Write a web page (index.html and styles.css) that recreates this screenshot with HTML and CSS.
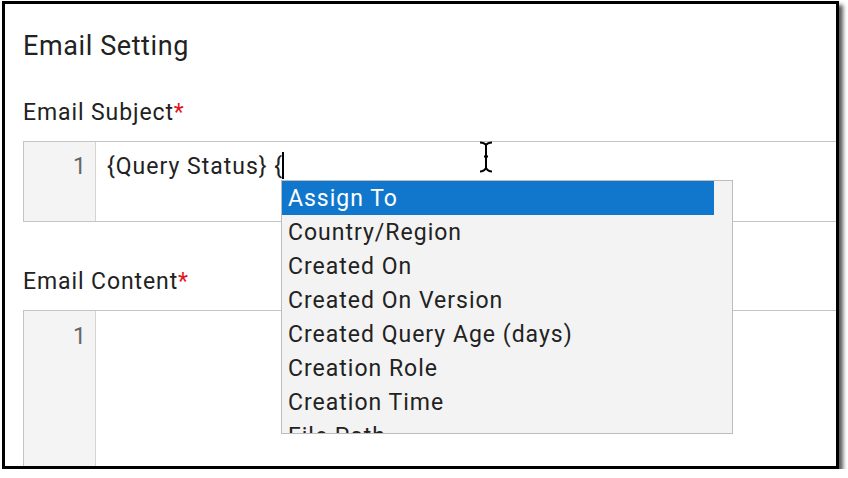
FILE: index.html
```html
<!DOCTYPE html>
<html>
<head>
<meta charset="utf-8">
<link rel="stylesheet" href="styles.css">
</head>
<body>
<div class="frame">
  <h1 class="title">Email Setting</h1>
  <div class="label">Email Subject<span class="req">*</span></div>
  <div class="editor subject">
    <div class="gutter"><span class="ln">1</span></div>
    <div class="code"><span class="line">{Query Status} {<span class="caret"></span></span></div>
    <ul class="suggest">
      <li class="sel">Assign To</li>
      <li>Country/Region</li>
      <li>Created On</li>
      <li>Created On Version</li>
      <li>Created Query Age (days)</li>
      <li>Creation Role</li>
      <li>Creation Time</li>
      <li>File Path</li>
    </ul>
  </div>
  <div class="label content-label">Email Content<span class="req">*</span></div>
  <div class="editor body-editor">
    <div class="gutter"><span class="ln">1</span></div>
    <div class="code"></div>
  </div>
  <svg class="ibeam" width="16" height="32" viewBox="0 0 16 32">
    <path d="M2 1.5 Q6 1.5 8 4 Q10 1.5 14 1.5 M8 4 L8 27 M2 30.5 Q6 30.5 8 27 Q10 30.5 14 30.5 M6 15.5 L10 15.5" fill="none" stroke="#000" stroke-width="2"/>
  </svg>
</div>
</body>
</html>
```
FILE: styles.css
```css
html, body {
  margin: 0;
  padding: 0;
  background: #fff;
}
body {
  font-family: Roboto, "Noto Sans", sans-serif;
  color: #222;
}
.frame {
  position: relative;
  margin: 1px 0 0 2px;
  width: 813px;
  height: 435px;
  border: 3px solid #000;
  box-shadow: 4px 4px 4px rgba(0,0,0,0.65);
  overflow: hidden;
  padding: 27px 0 0 18px;
}
.title {
  margin: 0;
  font-size: 27px;
  line-height: 30px;
  letter-spacing: 0.6px;
  font-weight: 400;
  color: #222;
}
.label {
  margin-top: 39px;
  font-size: 23px;
  line-height: 26px;
  letter-spacing: 0.9px;
  color: #222;
}
.req {
  color: #e3141b;
}
.editor {
  position: relative;
  display: flex;
  width: 860px;
  margin-top: 15px;
  border: 1px solid #c4c4c4;
  border-right: none;
  background: #fff;
}
.subject {
  height: 79px;
}
.content-label {
  margin-top: 47px;
}
.body-editor {
  height: 200px;
}
.gutter {
  width: 71px;
  flex: none;
  background: #f4f4f4;
  border-right: 1px solid #d4d4d4;
  text-align: right;
}
.ln {
  display: block;
  padding: 11px 9px 0 0;
  font-size: 23px;
  line-height: 27px;
  color: #666;
}
.body-editor .ln {
  padding-top: 12px;
}
.code {
  padding: 10px 0 0 11px;
  font-size: 23px;
  line-height: 27px;
  letter-spacing: 1px;
  color: #222;
}
.line {
  display: inline-block;
  white-space: pre;
  padding-top: 1px;
}
.caret {
  display: inline-block;
  width: 2px;
  height: 27px;
  margin-left: -1px;
  margin-top: -1px;
  background: #000;
  vertical-align: top;
}
.suggest {
  position: absolute;
  left: 257px;
  top: 38px;
  width: 450px;
  height: 252px;
  margin: 0;
  padding: 0;
  list-style: none;
  background: #f3f3f3;
  border: 1px solid #bdbdbd;
  overflow: hidden;
  z-index: 2;
}
.suggest li {
  width: 426px;
  height: 34px;
  padding-left: 6px;
  font-size: 23px;
  line-height: 36px;
  letter-spacing: 1px;
  color: #222;
  white-space: nowrap;
}
.suggest li.sel {
  background: #1177cc;
  color: #fff;
}
.ibeam {
  position: absolute;
  left: 473px;
  top: 137px;
  z-index: 3;
}
```
